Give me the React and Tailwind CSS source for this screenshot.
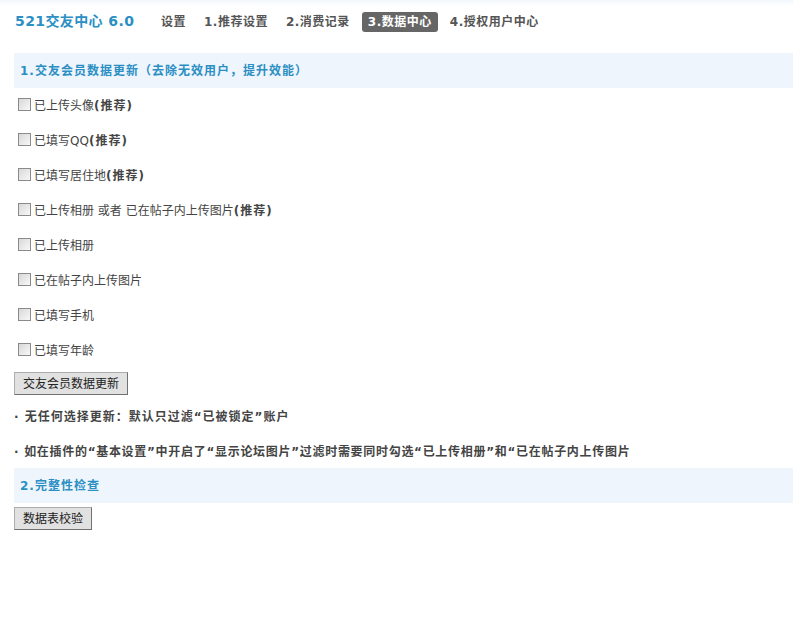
import React from "react";

const options = [
    { label: "已上传头像", tip: true },
    { label: "已填写QQ", tip: true },
    { label: "已填写居住地", tip: true },
    { label: "已上传相册 或者 已在帖子内上传图片", tip: true },
    { label: "已上传相册" },
    { label: "已在帖子内上传图片" },
    { label: "已填写手机" },
    { label: "已填写年龄" },
];

const navs = ["设置", "1.推荐设置", "2.消费记录", "3.数据中心", "4.授权用户中心"];

const font = { fontFamily: "Verdana, 'DejaVu Sans', 'Noto Sans CJK SC', sans-serif" };

const App = () => {
    return (
        <div className="w-[793px] h-[625px] bg-white text-[12px] text-[#444] overflow-hidden" style={font}>
            {/* header */}
            <div className="h-[53px] bg-gradient-to-b from-[#f3f7fb] to-white to-[12%] flex items-center pl-[15px] pb-[10px]">
                <div className="text-[14px] font-bold tracking-[0.4px] text-[#2b8fc4] w-[140px]">521交友中心 6.0</div>
                <div className="flex items-center gap-[6px]">
                    {navs.map((n, i) => (
                        <span
                            key={n}
                            className={
                                i === 3
                                    ? "bg-[#666] text-white font-bold tracking-[0.5px] rounded-[3px] px-[6px] h-[20px] leading-[20px]"
                                    : "text-[#555] font-bold tracking-[0.5px] px-[6px] h-[20px] leading-[20px]"
                            }
                        >
                            {n}
                        </span>
                    ))}
                </div>
            </div>

            <div className="pl-[14px]">
                <div className="h-[35px] bg-[#eef5fc] flex items-center pl-[6px] font-bold tracking-[1px] text-[#2b8fc4]">
                    1.交友会员数据更新（去除无效用户，提升效能）
                </div>

                {options.map((o) => (
                    <label key={o.label} className="h-[35px] flex items-center pl-[4px]">
                        <span className="w-[13px] h-[13px] border border-[#8a8a8a] bg-gradient-to-br from-[#d8d8d8] to-[#f8f8f8] mr-[3px] -mt-[3px]"></span>
                        <span>{o.label}</span>
                        {o.tip && <b className="text-[#444] tracking-[1px]">(推荐)</b>}
                    </label>
                ))}

                <div className="pt-[4px]">
                    <button className="h-[23px] px-[8px] bg-[#e1e1e1] border border-[#adadad] border-b-[#707070] border-r-[#707070] text-[12px] text-[#222]">
                        交友会员数据更新
                    </button>
                </div>

                <div className="h-[35px] mt-[4px] flex items-center font-bold tracking-[1px] text-[#444]">· 无任何选择更新：默认只过滤“已被锁定”账户</div>
                <div className="h-[35px] flex items-center font-bold tracking-[0.7px] text-[#444]">
                    · 如在插件的“基本设置”中开启了“显示论坛图片”过滤时需要同时勾选“已上传相册”和“已在帖子内上传图片
                </div>

                <div className="h-[35px] bg-[#eef5fc] flex items-center pl-[6px] font-bold tracking-[1px] text-[#2b8fc4] -mt-[1px]">
                    2.完整性检查
                </div>
                <div className="pt-[4px]">
                    <button className="h-[23px] px-[8px] bg-[#e1e1e1] border border-[#adadad] border-b-[#707070] border-r-[#707070] text-[12px] text-[#222]">
                        数据表校验
                    </button>
                </div>
            </div>
        </div>
    );
};

export default App;
